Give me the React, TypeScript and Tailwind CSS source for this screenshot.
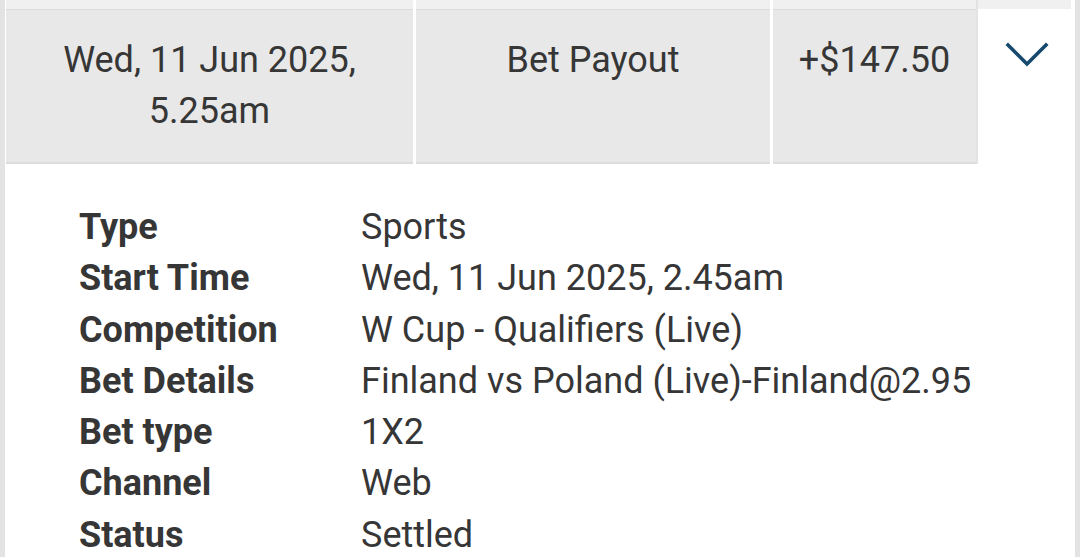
import React from "react";

const details: [string, string][] = [
    ["Type", "Sports"],
    ["Start Time", "Wed, 11 Jun 2025, 2.45am"],
    ["Competition", "W Cup - Qualifiers (Live)"],
    ["Bet Details", "Finland vs Poland (Live)-Finland@2.95"],
    ["Bet type", "1X2"],
    ["Channel", "Web"],
    ["Status", "Settled"],
];

export default function App() {
    return (
        <div
            className="w-[1080px] h-[557px] overflow-hidden bg-white border-x-[5px] border-[#e3e3e3] text-[#363636]"
            style={{ fontFamily: "Roboto, 'Noto Sans', sans-serif" }}
        >
            <div className="pl-px h-full flex flex-col">
                {/* previous row, cut off */}
                <div className="flex h-[9px] shrink-0">
                    <div className="w-[407px] bg-[#f0f0f0]" />
                    <div className="w-[3px]" />
                    <div className="w-[354px] bg-[#f0f0f0]" />
                    <div className="w-[3px]" />
                    <div className="w-[203px] bg-[#f0f0f0]" />
                    <div className="flex-1 border-l-2 border-[#e3e3e3] bg-[#f0f0f0] mr-[4px]" />
                </div>

                {/* transaction row */}
                <div className="flex shrink-0 text-[36px] leading-[51px]">
                    <div className="w-[407px] h-[155px] bg-[#e8e8e8] border-t border-b-2 border-[#dcdcdc] pt-[25px] text-center">
                        Wed, 11 Jun 2025,
                        <br />
                        5.25am
                    </div>
                    <div className="w-[3px]" />
                    <div className="w-[354px] h-[155px] bg-[#e8e8e8] border-t border-b-2 border-[#dcdcdc] pt-[25px] text-center">
                        Bet Payout
                    </div>
                    <div className="w-[3px]" />
                    <div className="w-[203px] h-[155px] bg-[#e8e8e8] border-t border-b-2 border-[#dcdcdc] pt-[25px] text-center">
                        +$147.50
                    </div>
                    <div className="flex-1 h-[155px] border-l-2 border-[#e3e3e3] flex justify-center pt-[33px]">
                        <svg width="44" height="26" viewBox="0 0 44 26" fill="none">
                            <polyline
                                points="3,3 22,22 41,3"
                                stroke="#174a6c"
                                strokeWidth="3.6"
                                strokeLinecap="square"
                            />
                        </svg>
                    </div>
                </div>

                {/* expanded details */}
                <div className="pl-[73px] pt-[38px] text-[36px] leading-[51.3px]">
                    {details.map(([label, value]) => (
                        <div key={label} className="flex">
                            <div className="w-[282px] font-bold">{label}</div>
                            <div>{value}</div>
                        </div>
                    ))}
                </div>
            </div>
        </div>
    );
}
